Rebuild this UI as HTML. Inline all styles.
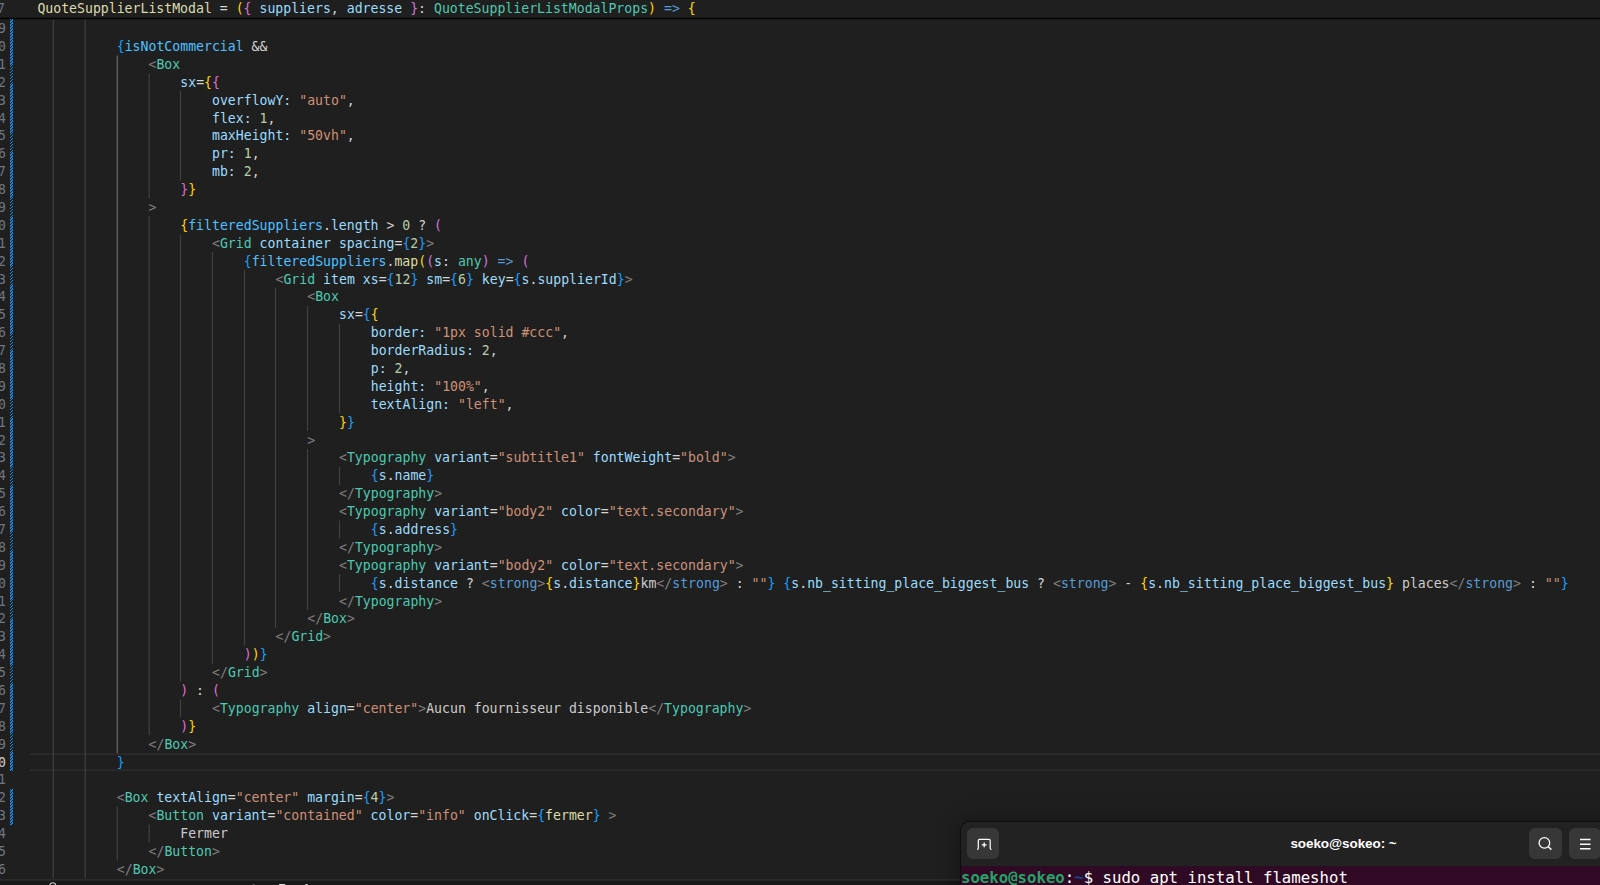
<!DOCTYPE html>
<html lang="fr"><head><meta charset="utf-8"><title>editor</title><style>
*{margin:0;padding:0;box-sizing:border-box}
html,body{width:1600px;height:885px;overflow:hidden;background:#1f1f1f}
body{position:relative;font-family:"DejaVu Sans Mono","Liberation Mono",monospace;font-size:13.184px;color:#d4d4d4}
#ed{position:absolute;left:0;top:0;width:1600px;height:885px;overflow:hidden;background:#1f1f1f}
.ln{position:absolute;white-space:pre;height:17.89px;line-height:17.89px}
.num{position:absolute;left:-40.5px;width:46.5px;text-align:right;height:17.89px;line-height:17.89px;color:#6e7681;white-space:pre}
.num.cur{color:#cccccc}
.g{position:absolute;width:1px;background:#404040;display:block}
.ga{background:#707070}
.d{color:#d4d4d4}.t{color:#808080}.c{color:#4ec9b0}.h{color:#569cd6}.a{color:#9cdcfe}.k{color:#4fc1ff}
.s{color:#ce9178}.n{color:#b5cea8}.f{color:#dcdcaa}.x{color:#cccccc}
.b1{color:#ffd700}.b2{color:#da70d6}.b3{color:#179fff}
.stripe{position:absolute;left:10px;width:3.4px;background:repeating-linear-gradient(135deg,#0f8cee 0,#0f8cee 1.2px,#1f1f1f 1.2px,#1f1f1f 2.09px)}
#cur{position:absolute;left:30px;right:0;top:753.99px;height:17.89px;border-top:1.5px solid #2b2b2b;border-bottom:1.5px solid #2b2b2b}
#sticky{position:absolute;left:0;top:0;width:1600px;height:17.8px;background:#1f1f1f}
#shadow{position:absolute;left:0;top:17px;width:1600px;height:3px;background:linear-gradient(#1f1f1f 0,#121212 0.8px,#000 1.25px,#000 2.1px,rgba(0,0,0,.2) 2.5px,rgba(0,0,0,0) 3px)}
#sticky .ln{top:0.2px;left:37.38px}
#sticky .num{top:0.2px;left:-41.5px}
#guides{position:absolute;left:0;top:0}
#panel{position:absolute;left:0;top:878.9px;width:1600px;height:7px;background:#181818}
#panel svg{position:absolute;left:0;top:0}

#term{position:absolute;left:960px;top:821px;width:660px;height:80px;border-radius:10px 0 0 0;background:#222222;border:1px solid #0e0e0e;box-shadow:0 2px 22px 3px rgba(0,0,0,.3);overflow:hidden}
#thead{position:absolute;left:0;top:0;width:100%;height:43.75px;background:#222222}
.tb{position:absolute;top:6px;width:32.5px;height:31px;border-radius:6px;background:#373737}
.tb svg{position:absolute;left:0;top:0}
#ttitle{position:absolute;left:280px;width:205px;top:0;height:43px;line-height:43px;text-align:center;color:#fff;font-family:"Liberation Sans","DejaVu Sans",sans-serif;font-weight:bold;font-size:13.5px;letter-spacing:-0.08px;white-space:pre}
#tbody{position:absolute;left:0;top:43.75px;width:100%;height:40px;background:#300a24;font-family:"DejaVu Sans Mono","Liberation Mono",monospace;font-size:15.68px;line-height:22px;white-space:pre;padding-left:0;padding-top:1px;text-indent:0}
.tg{color:#26a269;font-weight:bold}.tw{color:#ffffff}.tbl{color:#12488b;font-weight:bold}
</style></head>
<body>
<div id="ed">
<svg id="guides" width="1600" height="885" viewBox="0 0 1600 885"><rect x="30" y="753.3" width="1570" height="1.7" fill="#2c2c2c"/><rect x="30" y="769.5" width="1570" height="1.5" fill="#2c2c2c"/><rect x="52.72" y="19.60" width="1.15" height="858.72" fill="#414141"/><rect x="84.62" y="19.60" width="1.15" height="858.72" fill="#414141"/><rect x="116.67" y="55.58" width="1.15" height="697.62" fill="#6e6e6e"/><rect x="148.62" y="73.27" width="1.15" height="125.23" fill="#414141"/><rect x="148.62" y="216.39" width="1.15" height="518.81" fill="#414141"/><rect x="148.62" y="824.65" width="1.15" height="17.89" fill="#414141"/><rect x="179.93" y="91.16" width="1.15" height="89.45" fill="#414141"/><rect x="179.93" y="234.28" width="1.15" height="447.25" fill="#414141"/><rect x="179.93" y="699.42" width="1.15" height="17.89" fill="#414141"/><rect x="211.83" y="252.17" width="1.15" height="411.47" fill="#414141"/><rect x="243.93" y="270.06" width="1.15" height="375.69" fill="#414141"/><rect x="274.93" y="287.95" width="1.15" height="339.91" fill="#414141"/><rect x="306.93" y="305.84" width="1.15" height="125.23" fill="#414141"/><rect x="306.93" y="448.96" width="1.15" height="161.01" fill="#414141"/><rect x="338.93" y="323.73" width="1.15" height="89.45" fill="#414141"/><rect x="338.93" y="466.85" width="1.15" height="17.89" fill="#414141"/><rect x="338.93" y="520.52" width="1.15" height="17.89" fill="#414141"/><rect x="338.93" y="574.19" width="1.15" height="17.89" fill="#414141"/><rect x="116.67" y="806.76" width="1.15" height="53.67" fill="#414141"/></svg>
<div class="stripe" style="z-index:3;top:19.2px;height:752.28px"></div><div class="stripe" style="top:789.37px;height:35.78px"></div>
<div class="num" style="top:20.10px">139</div><div class="num" style="top:37.99px">140</div><div class="num" style="top:55.88px">141</div><div class="num" style="top:73.77px">142</div><div class="num" style="top:91.66px">143</div><div class="num" style="top:109.55px">144</div><div class="num" style="top:127.44px">145</div><div class="num" style="top:145.33px">146</div><div class="num" style="top:163.22px">147</div><div class="num" style="top:181.11px">148</div><div class="num" style="top:199.00px">149</div><div class="num" style="top:216.89px">150</div><div class="num" style="top:234.78px">151</div><div class="num" style="top:252.67px">152</div><div class="num" style="top:270.56px">153</div><div class="num" style="top:288.45px">154</div><div class="num" style="top:306.34px">155</div><div class="num" style="top:324.23px">156</div><div class="num" style="top:342.12px">157</div><div class="num" style="top:360.01px">158</div><div class="num" style="top:377.90px">159</div><div class="num" style="top:395.79px">160</div><div class="num" style="top:413.68px">161</div><div class="num" style="top:431.57px">162</div><div class="num" style="top:449.46px">163</div><div class="num" style="top:467.35px">164</div><div class="num" style="top:485.24px">165</div><div class="num" style="top:503.13px">166</div><div class="num" style="top:521.02px">167</div><div class="num" style="top:538.91px">168</div><div class="num" style="top:556.80px">169</div><div class="num" style="top:574.69px">170</div><div class="num" style="top:592.58px">171</div><div class="num" style="top:610.47px">172</div><div class="num" style="top:628.36px">173</div><div class="num" style="top:646.25px">174</div><div class="num" style="top:664.14px">175</div><div class="num" style="top:682.03px">176</div><div class="num" style="top:699.92px">177</div><div class="num" style="top:717.81px">178</div><div class="num" style="top:735.70px">179</div><div class="num cur" style="top:753.59px">180</div><div class="num" style="top:771.48px">181</div><div class="num" style="top:789.37px">182</div><div class="num" style="top:807.26px">183</div><div class="num" style="top:825.15px">184</div><div class="num" style="top:843.04px">185</div><div class="num" style="top:860.93px">186</div>
<div class="ln" style="top:37.99px;left:116.75px"><span class="b3">{</span><span class="k">isNotCommercial</span><span class="d"> &amp;&amp;</span></div><div class="ln" style="top:55.88px;left:148.50px"><span class="t">&lt;</span><span class="c">Box</span></div><div class="ln" style="top:73.77px;left:180.25px"><span class="a">sx</span><span class="d">=</span><span class="b1">{</span><span class="b2">{</span></div><div class="ln" style="top:91.66px;left:212.00px"><span class="a">overflowY:</span><span class="d"> </span><span class="s">"auto"</span><span class="d">,</span></div><div class="ln" style="top:109.55px;left:212.00px"><span class="a">flex:</span><span class="d"> </span><span class="n">1</span><span class="d">,</span></div><div class="ln" style="top:127.44px;left:212.00px"><span class="a">maxHeight:</span><span class="d"> </span><span class="s">"50vh"</span><span class="d">,</span></div><div class="ln" style="top:145.33px;left:212.00px"><span class="a">pr:</span><span class="d"> </span><span class="n">1</span><span class="d">,</span></div><div class="ln" style="top:163.22px;left:212.00px"><span class="a">mb:</span><span class="d"> </span><span class="n">2</span><span class="d">,</span></div><div class="ln" style="top:181.11px;left:180.25px"><span class="b2">}</span><span class="b1">}</span></div><div class="ln" style="top:199.00px;left:148.50px"><span class="t">&gt;</span></div><div class="ln" style="top:216.89px;left:180.25px"><span class="b1">{</span><span class="k">filteredSuppliers</span><span class="d">.</span><span class="a">length</span><span class="d"> &gt; </span><span class="n">0</span><span class="d"> ? </span><span class="b2">(</span></div><div class="ln" style="top:234.78px;left:212.00px"><span class="t">&lt;</span><span class="c">Grid</span><span class="d"> </span><span class="a">container</span><span class="d"> </span><span class="a">spacing</span><span class="d">=</span><span class="b3">{</span><span class="n">2</span><span class="b3">}</span><span class="t">&gt;</span></div><div class="ln" style="top:252.67px;left:243.75px"><span class="b3">{</span><span class="k">filteredSuppliers</span><span class="d">.</span><span class="f">map</span><span class="b1">(</span><span class="b2">(</span><span class="a">s</span><span class="d">: </span><span class="c">any</span><span class="b2">)</span><span class="d"> </span><span class="h">=&gt;</span><span class="d"> </span><span class="b2">(</span></div><div class="ln" style="top:270.56px;left:275.50px"><span class="t">&lt;</span><span class="c">Grid</span><span class="d"> </span><span class="a">item</span><span class="d"> </span><span class="a">xs</span><span class="d">=</span><span class="b3">{</span><span class="n">12</span><span class="b3">}</span><span class="d"> </span><span class="a">sm</span><span class="d">=</span><span class="b3">{</span><span class="n">6</span><span class="b3">}</span><span class="d"> </span><span class="a">key</span><span class="d">=</span><span class="b3">{</span><span class="a">s</span><span class="d">.</span><span class="a">supplierId</span><span class="b3">}</span><span class="t">&gt;</span></div><div class="ln" style="top:288.45px;left:307.25px"><span class="t">&lt;</span><span class="c">Box</span></div><div class="ln" style="top:306.34px;left:339.00px"><span class="a">sx</span><span class="d">=</span><span class="b3">{</span><span class="b1">{</span></div><div class="ln" style="top:324.23px;left:370.75px"><span class="a">border:</span><span class="d"> </span><span class="s">"1px solid #ccc"</span><span class="d">,</span></div><div class="ln" style="top:342.12px;left:370.75px"><span class="a">borderRadius:</span><span class="d"> </span><span class="n">2</span><span class="d">,</span></div><div class="ln" style="top:360.01px;left:370.75px"><span class="a">p:</span><span class="d"> </span><span class="n">2</span><span class="d">,</span></div><div class="ln" style="top:377.90px;left:370.75px"><span class="a">height:</span><span class="d"> </span><span class="s">"100%"</span><span class="d">,</span></div><div class="ln" style="top:395.79px;left:370.75px"><span class="a">textAlign:</span><span class="d"> </span><span class="s">"left"</span><span class="d">,</span></div><div class="ln" style="top:413.68px;left:339.00px"><span class="b1">}</span><span class="b3">}</span></div><div class="ln" style="top:431.57px;left:307.25px"><span class="t">&gt;</span></div><div class="ln" style="top:449.46px;left:339.00px"><span class="t">&lt;</span><span class="c">Typography</span><span class="d"> </span><span class="a">variant</span><span class="d">=</span><span class="s">"subtitle1"</span><span class="d"> </span><span class="a">fontWeight</span><span class="d">=</span><span class="s">"bold"</span><span class="t">&gt;</span></div><div class="ln" style="top:467.35px;left:370.75px"><span class="b3">{</span><span class="a">s</span><span class="d">.</span><span class="a">name</span><span class="b3">}</span></div><div class="ln" style="top:485.24px;left:339.00px"><span class="t">&lt;/</span><span class="c">Typography</span><span class="t">&gt;</span></div><div class="ln" style="top:503.13px;left:339.00px"><span class="t">&lt;</span><span class="c">Typography</span><span class="d"> </span><span class="a">variant</span><span class="d">=</span><span class="s">"body2"</span><span class="d"> </span><span class="a">color</span><span class="d">=</span><span class="s">"text.secondary"</span><span class="t">&gt;</span></div><div class="ln" style="top:521.02px;left:370.75px"><span class="b3">{</span><span class="a">s</span><span class="d">.</span><span class="a">address</span><span class="b3">}</span></div><div class="ln" style="top:538.91px;left:339.00px"><span class="t">&lt;/</span><span class="c">Typography</span><span class="t">&gt;</span></div><div class="ln" style="top:556.80px;left:339.00px"><span class="t">&lt;</span><span class="c">Typography</span><span class="d"> </span><span class="a">variant</span><span class="d">=</span><span class="s">"body2"</span><span class="d"> </span><span class="a">color</span><span class="d">=</span><span class="s">"text.secondary"</span><span class="t">&gt;</span></div><div class="ln" style="top:574.69px;left:370.75px"><span class="b3">{</span><span class="a">s</span><span class="d">.</span><span class="a">distance</span><span class="d"> ? </span><span class="t">&lt;</span><span class="h">strong</span><span class="t">&gt;</span><span class="b1">{</span><span class="a">s</span><span class="d">.</span><span class="a">distance</span><span class="b1">}</span><span class="x">km</span><span class="t">&lt;/</span><span class="h">strong</span><span class="t">&gt;</span><span class="d"> : </span><span class="s">""</span><span class="b3">}</span><span class="x"> </span><span class="b3">{</span><span class="a">s</span><span class="d">.</span><span class="a">nb_sitting_place_biggest_bus</span><span class="d"> ? </span><span class="t">&lt;</span><span class="h">strong</span><span class="t">&gt;</span><span class="x"> - </span><span class="b1">{</span><span class="a">s</span><span class="d">.</span><span class="a">nb_sitting_place_biggest_bus</span><span class="b1">}</span><span class="x"> places</span><span class="t">&lt;/</span><span class="h">strong</span><span class="t">&gt;</span><span class="d"> : </span><span class="s">""</span><span class="b3">}</span></div><div class="ln" style="top:592.58px;left:339.00px"><span class="t">&lt;/</span><span class="c">Typography</span><span class="t">&gt;</span></div><div class="ln" style="top:610.47px;left:307.25px"><span class="t">&lt;/</span><span class="c">Box</span><span class="t">&gt;</span></div><div class="ln" style="top:628.36px;left:275.50px"><span class="t">&lt;/</span><span class="c">Grid</span><span class="t">&gt;</span></div><div class="ln" style="top:646.25px;left:243.75px"><span class="b2">)</span><span class="b1">)</span><span class="b3">}</span></div><div class="ln" style="top:664.14px;left:212.00px"><span class="t">&lt;/</span><span class="c">Grid</span><span class="t">&gt;</span></div><div class="ln" style="top:682.03px;left:180.25px"><span class="b2">)</span><span class="d"> : </span><span class="b2">(</span></div><div class="ln" style="top:699.92px;left:212.00px"><span class="t">&lt;</span><span class="c">Typography</span><span class="d"> </span><span class="a">align</span><span class="d">=</span><span class="s">"center"</span><span class="t">&gt;</span><span class="x">Aucun fournisseur disponible</span><span class="t">&lt;/</span><span class="c">Typography</span><span class="t">&gt;</span></div><div class="ln" style="top:717.81px;left:180.25px"><span class="b2">)</span><span class="b1">}</span></div><div class="ln" style="top:735.70px;left:148.50px"><span class="t">&lt;/</span><span class="c">Box</span><span class="t">&gt;</span></div><div class="ln" style="top:753.59px;left:116.75px"><span class="b3">}</span></div><div class="ln" style="top:789.37px;left:116.75px"><span class="t">&lt;</span><span class="c">Box</span><span class="d"> </span><span class="a">textAlign</span><span class="d">=</span><span class="s">"center"</span><span class="d"> </span><span class="a">margin</span><span class="d">=</span><span class="b3">{</span><span class="n">4</span><span class="b3">}</span><span class="t">&gt;</span></div><div class="ln" style="top:807.26px;left:148.50px"><span class="t">&lt;</span><span class="c">Button</span><span class="d"> </span><span class="a">variant</span><span class="d">=</span><span class="s">"contained"</span><span class="d"> </span><span class="a">color</span><span class="d">=</span><span class="s">"info"</span><span class="d"> </span><span class="a">onClick</span><span class="d">=</span><span class="b3">{</span><span class="f">fermer</span><span class="b3">}</span><span class="d"> </span><span class="t">&gt;</span></div><div class="ln" style="top:825.15px;left:180.25px"><span class="x">Fermer</span></div><div class="ln" style="top:843.04px;left:148.50px"><span class="t">&lt;/</span><span class="c">Button</span><span class="t">&gt;</span></div><div class="ln" style="top:860.93px;left:116.75px"><span class="t">&lt;/</span><span class="c">Box</span><span class="t">&gt;</span></div>
<div id="sticky"><div class="num">117</div><div class="ln"><span class="f">QuoteSupplierListModal</span><span class="d"> = </span><span class="b1">(</span><span class="b2">{</span><span class="d"> </span><span class="a">suppliers</span><span class="d">, </span><span class="a">adresse</span><span class="d"> </span><span class="b2">}</span><span class="d">: </span><span class="c">QuoteSupplierListModalProps</span><span class="b1">)</span><span class="d"> </span><span class="h">=&gt;</span><span class="d"> </span><span class="b1">{</span></div></div>
<div id="shadow"></div>
<div id="panel"><svg width="1600" height="7" viewBox="0 878.9 1600 7"><rect x="0" y="878.9" width="1600" height="1.7" fill="#2b2b2b"/><circle cx="52.75" cy="885.6" r="2.9" fill="none" stroke="#c8c8c8" stroke-width="1.1"/><rect x="252.7" y="884.2" width="2" height="1" fill="#777"/><rect x="279" y="883.9" width="6.2" height="1.2" fill="#ddd"/><rect x="305.3" y="884" width="2.4" height="1" fill="#ddd"/></svg></div>

<div id="term">
  <div id="thead">
    <div class="tb" style="left:5.5px"><svg width="32" height="31" viewBox="0 0 32 31"><path d="M10 21.4 Q11.3 21.4 11.3 20.2 V12.6 Q11.3 11.4 12.5 11.4 H22 Q23.2 11.4 23.2 12.6 V20.2 Q23.2 21.4 24.5 21.4" fill="none" stroke="#fff" stroke-width="1.2"/><path d="M14.8 16.9 H19.6 M17.2 14.5 V19.3" stroke="#fff" stroke-width="1.3" fill="none"/></svg></div>
    <div id="ttitle">soeko@sokeo: ~</div>
    <div class="tb" style="left:568px"><svg width="32" height="31" viewBox="0 0 32 31"><circle cx="15.4" cy="14.9" r="5.3" fill="none" stroke="#fff" stroke-width="1.3"/><path d="M19.3 18.8 L22.4 21.6" stroke="#fff" stroke-width="1.5"/></svg></div>
    <div class="tb" style="left:607.5px"><svg width="32" height="31" viewBox="0 0 32 31"><path d="M11 11.5 H21.5 M11 16.2 H21.5 M11 20.8 H21.5" stroke="#fff" stroke-width="1.5"/></svg></div>
  </div>
  <div id="tbody"><span class="tg">soeko@sokeo</span><span class="tw">:</span><span class="tbl">~</span><span class="tw">$ sudo apt install flameshot</span></div>
</div>

</div>
</body></html>
